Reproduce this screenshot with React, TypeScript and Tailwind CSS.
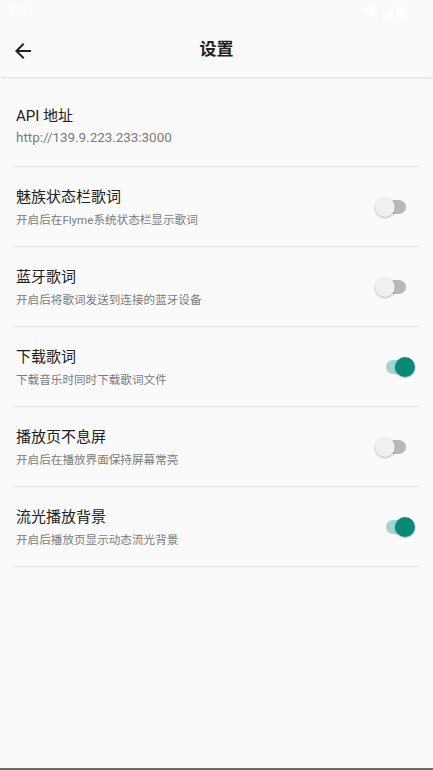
import React, { useState } from 'react';
import { MdArrowBack } from 'react-icons/md';

type Item = {
  key: string;
  title: string;
  desc: string;
  on: boolean;
};

const items: Item[] = [
  { key: 'meizu', title: '魅族状态栏歌词', desc: '开启后在Flyme系统状态栏显示歌词', on: false },
  { key: 'bt', title: '蓝牙歌词', desc: '开启后将歌词发送到连接的蓝牙设备', on: false },
  { key: 'download', title: '下载歌词', desc: '下载音乐时同时下载歌词文件', on: true },
  { key: 'screen', title: '播放页不息屏', desc: '开启后在播放界面保持屏幕常亮', on: false },
  { key: 'flow', title: '流光播放背景', desc: '开启后播放页显示动态流光背景', on: true },
];

const Toggle: React.FC<{ on: boolean; onClick: () => void }> = ({ on, onClick }) => (
  <button onClick={onClick} className="relative w-[40px] h-[20px] shrink-0" aria-label="toggle">
    <span
      className={`absolute left-[11px] top-[3px] w-[20px] h-[14px] rounded-full ${
        on ? 'bg-[#a3d5cf]' : 'bg-[#b9b9b9]'
      }`}
    />
    <span
      className={`absolute top-0 w-[20px] h-[20px] rounded-full shadow-[0_1px_2px_rgba(0,0,0,0.28)] ${
        on ? 'left-[20px] bg-[#0b877a]' : 'left-0 bg-[#f0f0f0]'
      }`}
    />
  </button>
);

const StatusBar: React.FC = () => (
  <div className="h-[24px] flex items-center justify-between pl-[8px] pr-[28px] text-white">
    <span className="text-[13px]">2:27</span>
    <div className="flex items-center gap-[4px]">
      <svg width="14" height="12" viewBox="0 0 14 12" fill="white">
        <path d="M7 11.5 0 3.2C1.9 1.6 4.3.6 7 .6s5.1 1 7 2.6L7 11.5Z" />
      </svg>
      <svg width="11" height="11" viewBox="0 0 11 11" fill="white">
        <path d="M11 0v11H0L11 0Z" />
      </svg>
      <svg width="8" height="13" viewBox="0 0 8 13" fill="white">
        <path d="M2.5 0h3v1H7.2c.4 0 .8.4.8.8v10.4c0 .4-.4.8-.8.8H.8c-.4 0-.8-.4-.8-.8V1.8c0-.4.4-.8.8-.8h1.7V0Z" />
      </svg>
    </div>
  </div>
);

export default function App() {
  const [state, setState] = useState<Record<string, boolean>>(
    Object.fromEntries(items.map((i) => [i.key, i.on]))
  );

  return (
    <div
      className="w-[433px] h-[770px] flex flex-col bg-[#fafafa] overflow-hidden"
      style={{ fontFamily: 'Roboto, "Noto Sans CJK SC", sans-serif' }}
    >
      <div className="bg-[#fafafa] shadow-[0_1px_2px_rgba(0,0,0,0.14)] relative z-10">
        <StatusBar />
        <div className="h-[53px] flex items-center relative">
          <button className="pl-[11px] text-[#212121]" aria-label="back">
            <MdArrowBack size={24} />
          </button>
          <div className="absolute inset-0 flex items-center justify-center pointer-events-none">
            <span className="text-[17px] font-bold text-[#212121] -mt-[2px]">设置</span>
          </div>
        </div>
      </div>

      <div className="flex-1 flex flex-col">
        <div className="mx-[15px] border-b border-[#e0e0e0] pl-[1px] pt-[29px] pb-[18px]">
          <div className="text-[15px] leading-[20px] text-[#212121]">API 地址</div>
          <div className="mt-[2px] text-[13.4px] leading-[20px] text-[#7a7a7a]">http://139.9.223.233:3000</div>
        </div>

        {items.map((item) => (
          <div
            key={item.key}
            className="mx-[15px] h-[80px] border-b border-[#e0e0e0] pl-[1px] pr-[3px] flex items-center justify-between"
          >
            <div className="pt-[1px]">
              <div className="text-[15px] leading-[20px] text-[#212121]">{item.title}</div>
              <div className="mt-[5px] text-[11.6px] leading-[16px] text-[#7a7a7a]">{item.desc}</div>
            </div>
            <Toggle
              on={state[item.key]}
              onClick={() => setState({ ...state, [item.key]: !state[item.key] })}
            />
          </div>
        ))}
      </div>

      <div className="h-[2px] bg-[#6b6b6b]" />
    </div>
  );
}
